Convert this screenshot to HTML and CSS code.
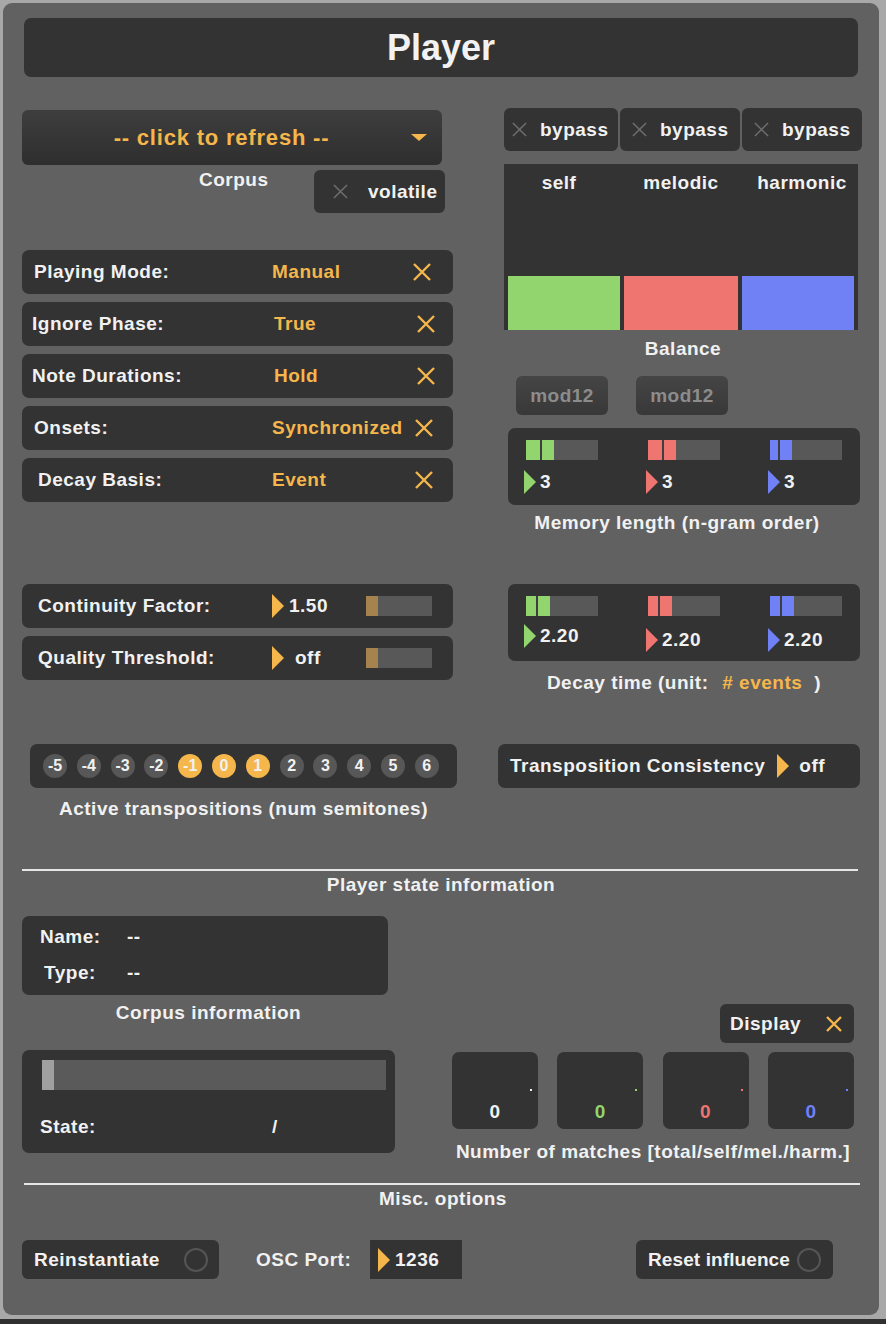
FILE: index.html
```html
<!DOCTYPE html>
<html lang="en">
<head>
<meta charset="utf-8">
<title>Player</title>
<link rel="stylesheet" href="styles.css">
</head>
<body>
<div class="panel">
  <div class="title">Player</div>

  <div class="band band-top">
    <div class="col col-left-top">
      <div class="dropdown">
        <span class="dropdown-text">-- click to refresh --</span>
        <svg class="dd-arrow" viewBox="0 0 16 7"><polygon points="0,0 16,0 8,7"/></svg>
      </div>
      <div class="corpus-row">
        <div class="corpus-label">Corpus</div>
        <div class="toggle volatile">
          <svg class="x-icon x-gray" viewBox="0 0 16 16"><path d="M1 1L15 15M15 1L1 15"/></svg>
          <span>volatile</span>
        </div>
      </div>
      <div class="setting first">
        <span class="s-label">Playing Mode:</span><span class="s-value">Manual</span>
        <svg class="x-icon x-orange" viewBox="0 0 18 18"><path d="M1 1L17 17M17 1L1 17"/></svg>
      </div>
      <div class="setting">
        <span class="s-label l-tight">Ignore Phase:</span><span class="s-value v-shift">True</span>
        <svg class="x-icon x-orange x-r" viewBox="0 0 18 18"><path d="M1 1L17 17M17 1L1 17"/></svg>
      </div>
      <div class="setting">
        <span class="s-label l-tight">Note Durations:</span><span class="s-value v-shift">Hold</span>
        <svg class="x-icon x-orange x-r" viewBox="0 0 18 18"><path d="M1 1L17 17M17 1L1 17"/></svg>
      </div>
      <div class="setting">
        <span class="s-label">Onsets:</span><span class="s-value">Synchronized</span>
        <svg class="x-icon x-orange x-m" viewBox="0 0 18 18"><path d="M1 1L17 17M17 1L1 17"/></svg>
      </div>
      <div class="setting">
        <span class="s-label l-wide">Decay Basis:</span><span class="s-value">Event</span>
        <svg class="x-icon x-orange x-m" viewBox="0 0 18 18"><path d="M1 1L17 17M17 1L1 17"/></svg>
      </div>
    </div>

    <div class="col col-right-top">
      <div class="bypass-row">
        <div class="toggle bypass b1">
          <svg class="x-icon x-gray" viewBox="0 0 16 16"><path d="M1 1L15 15M15 1L1 15"/></svg><span>bypass</span>
        </div>
        <div class="toggle bypass b2">
          <svg class="x-icon x-gray" viewBox="0 0 16 16"><path d="M1 1L15 15M15 1L1 15"/></svg><span>bypass</span>
        </div>
        <div class="toggle bypass b2">
          <svg class="x-icon x-gray" viewBox="0 0 16 16"><path d="M1 1L15 15M15 1L1 15"/></svg><span>bypass</span>
        </div>
      </div>
      <div class="balance">
        <div class="bal-label bl-self">self</div>
        <div class="bal-label">melodic</div>
        <div class="bal-label bl-harm">harmonic</div>
        <div class="bal-bar green-bg"></div>
        <div class="bal-bar red-bg"></div>
        <div class="bal-bar blue-bg"></div>
      </div>
      <div class="caption cap-balance">Balance</div>
      <div class="mod-row">
        <div class="mod-btn">mod12</div>
        <div class="mod-btn">mod12</div>
      </div>
      <div class="meter-box memory">
        <div class="meter">
          <div class="slider"><span class="seg green-bg w14"></span><span class="div-line"></span><span class="seg green-bg w12"></span></div>
          <div class="m-value"><svg class="tri green-fill" viewBox="0 0 12 24"><polygon points="0,0 12,12 0,24"/></svg><span>3</span></div>
        </div>
        <div class="meter">
          <div class="slider"><span class="seg red-bg w14"></span><span class="div-line"></span><span class="seg red-bg w12"></span></div>
          <div class="m-value"><svg class="tri red-fill" viewBox="0 0 12 24"><polygon points="0,0 12,12 0,24"/></svg><span>3</span></div>
        </div>
        <div class="meter">
          <div class="slider"><span class="seg blue-bg w8"></span><span class="div-line"></span><span class="seg blue-bg w12"></span></div>
          <div class="m-value"><svg class="tri blue-fill" viewBox="0 0 12 24"><polygon points="0,0 12,12 0,24"/></svg><span>3</span></div>
        </div>
      </div>
      <div class="caption cap-memory">Memory length (n-gram order)</div>
    </div>
  </div>

  <div class="band band-mid">
    <div class="col col-left-mid">
      <div class="setting num-row">
        <span class="s-label l-num">Continuity Factor:</span>
        <svg class="tri orange-fill" viewBox="0 0 12 24"><polygon points="0,0 12,12 0,24"/></svg>
        <span class="n-value">1.50</span>
        <div class="hslider"><span class="hfill"></span></div>
      </div>
      <div class="setting num-row">
        <span class="s-label l-num">Quality Threshold:</span>
        <svg class="tri orange-fill" viewBox="0 0 12 24"><polygon points="0,0 12,12 0,24"/></svg>
        <span class="n-value off">off</span>
        <div class="hslider"><span class="hfill"></span></div>
      </div>
    </div>
    <div class="col col-right-mid">
      <div class="meter-box decay">
        <div class="meter">
          <div class="slider"><span class="seg green-bg w10"></span><span class="div-line"></span><span class="seg green-bg w12"></span></div>
          <div class="m-value hi"><svg class="tri green-fill" viewBox="0 0 12 24"><polygon points="0,0 12,12 0,24"/></svg><span>2.20</span></div>
        </div>
        <div class="meter">
          <div class="slider"><span class="seg red-bg w10"></span><span class="div-line"></span><span class="seg red-bg w12"></span></div>
          <div class="m-value"><svg class="tri red-fill" viewBox="0 0 12 24"><polygon points="0,0 12,12 0,24"/></svg><span>2.20</span></div>
        </div>
        <div class="meter">
          <div class="slider"><span class="seg blue-bg w10"></span><span class="div-line"></span><span class="seg blue-bg w12"></span></div>
          <div class="m-value"><svg class="tri blue-fill" viewBox="0 0 12 24"><polygon points="0,0 12,12 0,24"/></svg><span>2.20</span></div>
        </div>
      </div>
      <div class="caption cap-decay">Decay time (unit: <span class="orange unit">#&nbsp;events</span><span class="paren">)</span></div>
    </div>
  </div>

  <div class="band band-trans">
    <div class="col col-left-trans">
      <div class="trans-box">
        <span class="tcirc">-5</span><span class="tcirc">-4</span><span class="tcirc">-3</span><span class="tcirc">-2</span>
        <span class="tcirc on">-1</span><span class="tcirc on">0</span><span class="tcirc on">1</span>
        <span class="tcirc">2</span><span class="tcirc">3</span><span class="tcirc">4</span><span class="tcirc">5</span><span class="tcirc">6</span>
      </div>
      <div class="caption cap-trans">Active transpositions (num semitones)</div>
    </div>
    <div class="consistency">
      <span>Transposition Consistency</span>
      <svg class="tri orange-fill" viewBox="0 0 12 24"><polygon points="0,0 12,12 0,24"/></svg>
      <span class="c-off">off</span>
    </div>
  </div>

  <div class="rule rule1"></div>
  <div class="section-title">Player state information</div>

  <div class="band band-state">
    <div class="col col-left-state">
      <div class="info-box">
        <span class="i-label">Name:</span><span class="i-value">--</span>
        <span class="i-label">Type:</span><span class="i-value">--</span>
      </div>
      <div class="caption cap-info">Corpus information</div>
      <div class="state-box">
        <div class="progress"><span class="pfill"></span></div>
        <div class="state-row"><span class="st-label">State:</span><span class="st-value">/</span></div>
      </div>
    </div>
    <div class="col col-right-state">
      <div class="toggle display">
        <span>Display</span>
        <svg class="x-icon x-orange" viewBox="0 0 16 16"><path d="M1 1L15 15M15 1L1 15"/></svg>
      </div>
      <div class="matches">
        <div class="match"><span class="dot white-bg"></span><span class="m-num">0</span></div>
        <div class="match"><span class="dot green-bg"></span><span class="m-num green">0</span></div>
        <div class="match"><span class="dot red-bg"></span><span class="m-num red">0</span></div>
        <div class="match"><span class="dot blue-bg"></span><span class="m-num blue">0</span></div>
      </div>
      <div class="caption cap-matches">Number of matches [total/self/mel./harm.]</div>
    </div>
  </div>

  <div class="rule rule2"></div>
  <div class="section-title misc">Misc. options</div>

  <div class="band band-misc">
    <div class="btn reinst"><span class="btn-text">Reinstantiate</span><span class="ring"></span></div>
    <div class="osc-label">OSC Port:</div>
    <div class="numbox">
      <svg class="tri orange-fill" viewBox="0 0 12 24"><polygon points="0,0 12,12 0,24"/></svg>
      <span>1236</span>
    </div>
    <div class="btn reset"><span class="btn-text clip">Reset influence</span><span class="ring"></span></div>
  </div>
</div>
<div class="bottom-strip"></div>
</body>
</html>
```

FILE: styles.css
```css
* { box-sizing: border-box; }
html, body { margin: 0; padding: 0; }
body {
  width: 886px;
  height: 1324px;
  overflow: hidden;
  background: #a8a8a8;
  font-family: "Liberation Sans", Arial, Helvetica, sans-serif;
  font-weight: bold;
  font-size: 19px;
  letter-spacing: 0.5px;
  color: #f1f1f1;
}
.panel {
  margin: 3px 0 0 3px;
  width: 876px;
  height: 1312px;
  background: #616161;
  border-radius: 9px;
  padding-top: 15px;
  display: flex;
  flex-direction: column;
}
.bottom-strip { height: 5px; margin-top: 4px; background: #303030; }

.title {
  margin-left: 21px;
  width: 834px;
  height: 59px;
  background: #333;
  border-radius: 7px;
  display: flex;
  align-items: center;
  justify-content: center;
  font-size: 36px;
  letter-spacing: 0;
  color: #f2f2f2;
}

.band { display: flex; align-items: flex-start; margin-left: 19px; }
.col { display: flex; flex-direction: column; }

/* colors */
.orange { color: #f5b64c; }
.green { color: #92d46e; }
.red { color: #ee7570; }
.blue { color: #7080f5; }
.green-bg { background: #92d46e; }
.red-bg { background: #ee7570; }
.blue-bg { background: #7080f5; }
.white-bg { background: #f0f0f0; }
.green-fill { fill: #92d46e; }
.red-fill { fill: #ee7570; }
.blue-fill { fill: #7080f5; }
.orange-fill { fill: #f5b64c; }

.x-icon { fill: none; stroke-linecap: butt; flex: none; }
.x-gray { stroke: #6e6e6e; stroke-width: 1.6; width: 15px; height: 15px; }
.x-orange { stroke: #f5b64c; stroke-width: 2.4; width: 18px; height: 18px; }

.tri { width: 12px; height: 24px; flex: none; }

/* top band */
.band-top { margin-top: 31px; }
.col-left-top { width: 431px; flex: none; }
.dropdown {
  margin-top: 2px;
  width: 420px;
  height: 55px;
  border-radius: 6px;
  background: linear-gradient(#3e3e3e, #2e2e2e);
  display: flex;
  align-items: center;
  padding: 0 15px 0 10px;
  color: #f5b64c;
}
.dropdown-text { flex: 1; text-align: center; font-size: 22px; letter-spacing: 0.8px; }
.dd-arrow { width: 16px; height: 7px; fill: #f5b64c; }

.corpus-row { display: flex; margin-top: 5px; }
.corpus-label { width: 292px; padding-left: 177px; line-height: 20px; }

.toggle {
  background: #333;
  border-radius: 6px;
  display: flex;
  align-items: center;
}
.volatile { width: 131px; height: 43px; padding-left: 19px; gap: 20px; }

.setting {
  width: 431px;
  height: 44px;
  margin-top: 8px;
  background: #333;
  border-radius: 7px;
  display: flex;
  align-items: center;
  padding-left: 12px;
}
.setting.first { margin-top: 37px; }
.s-label { width: 238px; flex: none; }
.s-label.l-tight { width: 240px; padding-left: 0; margin-left: -2px; }
.s-label.l-wide { padding-left: 4px; }
.s-value { flex: 1; color: #f5b64c; }
.s-value.v-shift { padding-left: 2px; }
.setting .x-orange { margin-right: 22px; }
.setting .x-orange.x-r { margin-right: 18px; }
.setting .x-orange.x-m { margin-right: 20px; }

.col-right-top { width: 358px; margin-left: 51px; flex: none; }
.bypass-row { display: flex; gap: 2px; height: 43px; }
.bypass { height: 43px; gap: 13px; }
.bypass.b1 { width: 114px; padding-left: 8px; }
.bypass.b2 { width: 120px; padding-left: 12px; }

.balance {
  margin-top: 13px;
  width: 354px;
  height: 166px;
  background: #333;
  display: grid;
  grid-template-columns: 112px 114px 112px;
  grid-template-rows: 1fr 54px;
  column-gap: 4px;
  padding: 0 4px;
}
.bal-label { text-align: center; line-height: 22px; margin-top: 8px; }
.bl-self { padding-right: 10px; }
.bl-harm { padding-left: 8px; }

.caption { line-height: 20px; text-align: center; white-space: nowrap; }
.cap-balance { margin-top: 9px; }

.mod-row { display: flex; gap: 28px; margin-top: 17px; margin-left: 12px; }
.mod-btn {
  width: 92px;
  height: 39px;
  border-radius: 6px;
  background: linear-gradient(#454545, #383838);
  color: #8c8c8c;
  display: flex;
  align-items: center;
  justify-content: center;
}

.meter-box {
  width: 352px;
  height: 77px;
  background: #333;
  border-radius: 7px;
  display: flex;
  padding-left: 18px;
}
.memory { margin-top: 13px; margin-left: 4px; }
.meter { width: 122px; flex: none; display: flex; flex-direction: column; }
.slider {
  margin-top: 12px;
  width: 72px;
  height: 20px;
  background: #585858;
  display: flex;
}
.seg { height: 100%; }
.w14 { width: 14px; }
.w12 { width: 12px; }
.w10 { width: 10px; }
.w8 { width: 8px; }
.div-line { width: 2px; height: 100%; background: #3e3e3e; }
.m-value { display: flex; align-items: center; gap: 4px; margin-left: -2px; margin-top: 10px; height: 24px; }
.cap-memory { margin-top: 8px; padding-right: 12px; }

/* mid band */
.band-mid { margin-top: 51px; }
.col-left-mid { width: 431px; flex: none; }
.num-row { margin-top: 8px; }
.num-row:first-child { margin-top: 0; }
.s-label.l-num { width: 238px; padding-left: 4px; }
.n-value { width: 82px; padding-left: 5px; flex: none; }
.n-value.off { padding-left: 11px; }
.hslider { width: 66px; height: 20px; background: #585858; display: flex; flex: none; }
.hfill { width: 12px; height: 100%; background: #a5834f; }

.col-right-mid { width: 352px; margin-left: 55px; flex: none; }
.decay .m-value { margin-top: 12px; }
.decay .m-value.hi { margin-top: 8px; }
.cap-decay { margin-top: 12px; }
.unit { margin-left: 8px; }
.paren { margin-left: 12px; }

/* transpositions */
.band-trans { margin-top: 51px; margin-left: 27px; }
.col-left-trans { width: 427px; flex: none; }
.trans-box {
  height: 44px;
  background: #333;
  border-radius: 7px;
  display: flex;
  align-items: center;
  padding-left: 13px;
  gap: 9.8px;
}
.tcirc {
  width: 24px;
  height: 24px;
  border-radius: 50%;
  background: #575757;
  display: flex;
  align-items: center;
  justify-content: center;
  font-size: 16px;
  letter-spacing: 0;
  flex: none;
}
.tcirc.on { background: #f5b64c; }
.cap-trans { margin-top: 11px; }
.consistency {
  margin-left: 41px;
  width: 362px;
  height: 44px;
  background: #333;
  border-radius: 7px;
  display: flex;
  align-items: center;
  padding-left: 12px;
  flex: none;
}
.consistency .tri { margin-left: 12px; }
.c-off { margin-left: 10px; }

/* rules */
.rule { height: 2px; width: 836px; background: #e6e6e6; }
.rule1 { margin-top: 50px; margin-left: 19px; }
.rule2 { margin-top: 21px; margin-left: 21px; }
.section-title { margin-top: 4px; line-height: 20px; text-align: center; }
.section-title.misc { padding-left: 4px; }

/* state band */
.band-state { margin-top: 21px; }
.col-left-state { width: 373px; flex: none; }
.info-box {
  width: 366px;
  height: 79px;
  background: #333;
  border-radius: 7px;
  display: grid;
  grid-template-columns: 60px auto;
  column-gap: 27px;
  row-gap: 14px;
  align-content: start;
  padding: 10px 0 0 18px;
  line-height: 22px;
}
.i-label { text-align: center; }
.cap-info { margin-top: 8px; }
.state-box {
  margin-top: 27px;
  width: 373px;
  height: 103px;
  background: #333;
  border-radius: 7px;
  padding-top: 10px;
}
.progress { margin-left: 20px; width: 344px; height: 30px; background: #5a5a5a; display: flex; }
.pfill { width: 12px; height: 100%; background: #a0a0a0; }
.state-row { display: flex; margin-top: 26px; line-height: 22px; padding-left: 18px; }
.st-label { width: 232px; }

.col-right-state { width: 402px; margin-left: 57px; flex: none; }
.display {
  margin-top: 88px;
  margin-left: 268px;
  width: 134px;
  height: 39px;
  padding-left: 10px;
}
.display .x-orange { width: 16px; height: 16px; margin-left: auto; margin-right: 12px; }
.matches { margin-top: 9px; display: flex; justify-content: space-between; }
.match {
  width: 86px;
  height: 77px;
  background: #333;
  border-radius: 7px;
  display: flex;
  flex-direction: column;
}
.dot { width: 2px; height: 2px; margin: 37px 0 0 78px; }
.m-num { margin-top: 10px; line-height: 22px; text-align: center; }
.cap-matches { margin-top: 13px; }

/* misc band */
.band-misc { margin-top: 31px; height: 39px; align-items: stretch; }
.btn {
  width: 197px;
  background: #333;
  border-radius: 6px;
  display: flex;
  align-items: center;
  padding-left: 12px;
  flex: none;
}
.btn-text { flex: none; white-space: nowrap; }
.reinst .btn-text { width: 150px; }
.btn-text.clip { width: 145px; overflow: hidden; letter-spacing: 0.1px; }
.ring {
  width: 24px;
  height: 24px;
  border-radius: 50%;
  border: 2px solid #555;
  flex: none;
  margin-left: auto;
  margin-right: 11px;
}
.reset .ring { margin-left: 4px; }
.osc-label { margin-left: 37px; width: 114px; display: flex; align-items: center; flex: none; }
.numbox { width: 92px; background: #333; display: flex; align-items: center; padding-left: 8px; gap: 5px; flex: none; }
.reset { margin-left: 174px; }
```
